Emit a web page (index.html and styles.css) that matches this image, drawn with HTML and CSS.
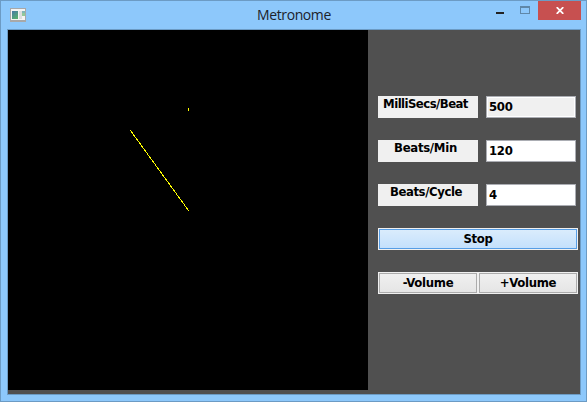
FILE: index.html
```
<!DOCTYPE html>
<html lang="en">
<head>
<meta charset="utf-8">
<title>Metronome</title>
<link rel="stylesheet" href="styles.css">
</head>
<body>
<div class="window">
  <header class="titlebar">
    <svg class="app-icon" width="16" height="14" viewBox="0 0 16 14" shape-rendering="crispEdges">
      <defs><linearGradient id="pane" x1="0" y1="0" x2="0.6" y2="1"><stop offset="0" stop-color="#4779a8"/><stop offset="1" stop-color="#57ad72"/></linearGradient></defs>
      <rect width="16" height="14" rx="1" fill="#a8a8a8"/>
      <rect x="1" y="1" width="14" height="11" fill="#f4f4f4"/>
      <rect x="2" y="3" width="6" height="8" fill="url(#pane)"/>
      <rect x="9" y="3" width="3" height="8" fill="#dedede"/>
      <rect x="12" y="3" width="3" height="2" fill="#7fb6b8"/>
      <rect x="12" y="5" width="3" height="3" fill="#92c99a"/>
    </svg>
    <h1 class="title">Metronome</h1>
    <div class="controls">
      <svg width="42" height="19" viewBox="0 0 42 19" shape-rendering="crispEdges">
        <rect x="0" y="11" width="8" height="2" fill="#222"/>
        <path d="M24 5h10v8H24zM25 7v5h8V7z" fill="#5f87a8" fill-rule="evenodd"/>
      </svg>
      <span class="close">
        <svg width="8" height="7" viewBox="0 0 8 7"><path d="M.7 .2 7.3 6.8M7.3 .2 .7 6.8" stroke="#fff" stroke-width="1.8"/></svg>
      </span>
    </div>
  </header>
  <main class="client">
    <svg class="dial" width="360" height="360" viewBox="0 0 360 360" shape-rendering="crispEdges">
      <path d="M180 78h1v3h-1z" fill="#ff0"/>
      <path d="M122.5 100.5 180.5 180.5" stroke="#ff0" stroke-width="1" stroke-linecap="square"/>
    </svg>
    <section class="panel">
      <div class="row"><span class="label l-beat">MilliSecs/Beat</span><span class="field readonly">500</span></div>
      <div class="row"><span class="label">Beats/Min</span><span class="field">120</span></div>
      <div class="row"><span class="label l-cycle">Beats/Cycle</span><span class="field">4</span></div>
      <div class="buttons"><button class="btn focused">Stop</button></div>
      <div class="buttons"><button class="btn">-Volume</button><button class="btn">+Volume</button></div>
    </section>
  </main>
</div>
</body>
</html>
```
FILE: styles.css
```
* { box-sizing: border-box; }
body { margin: 0; }
.window {
  width: 587px;
  height: 402px;
  background: #8dc8fb;
  border: 1px solid #6c9bc4;
  padding: 0 5px 6px 6px;
}
.titlebar {
  height: 28px;
  display: grid;
  grid-template-columns: 180px 213px 1fr;
  align-items: start;
}
.app-icon { margin: 7px 0 0 3px; }
.title {
  margin: 4px 0 0;
  padding-left: 1px;
  text-align: center;
  font: 400 14px/20px "Open Sans", "Noto Sans", sans-serif;
  letter-spacing: -0.4px;
  color: #1c222a;
}
.controls { display: flex; justify-content: flex-end; }
.close {
  width: 43px;
  height: 19px;
  display: flex;
  align-items: center;
  justify-content: center;
  background: #c75050;
}
.client {
  width: 574px;
  height: 366px;
  display: flex;
  align-items: flex-start;
  background: #505050;
  border: 1px solid #6c9bc4;
}
.dial { display: block; background: #000; }
.panel {
  width: 200px;
  margin: 66px 0 0 10px;
  display: flex;
  flex-direction: column;
  gap: 22px;
  font: bold 13px/16px "DejaVu Sans Condensed", "DejaVu Sans", sans-serif;
  font-stretch: condensed;
  letter-spacing: -0.3px;
  color: #000;
}
.row { display: flex; gap: 8px; height: 22px; }
.label {
  width: 100px;
  padding-right: 5px;
  background: #f0f0f0;
  text-align: center;
  white-space: nowrap;
}
.l-beat { letter-spacing: -0.55px; }
.l-cycle { padding-right: 4px; letter-spacing: -0.4px; }
.field {
  width: 90px;
  padding: 2px 2px;
  border: 1px solid #abadb3;
  background: #fff;
}
.readonly { background: #f0f0f0; box-shadow: inset 0 0 0 1px #fff; }
.buttons {
  display: flex;
  gap: 2px;
  height: 22px;
  padding: 1px;
  background: #f0f0f0;
}
.btn {
  flex: 1;
  padding: 0;
  border: 1px solid #acacac;
  background: linear-gradient(#f0f0f0, #e5e5e5);
  font: inherit;
  letter-spacing: inherit;
  color: inherit;
}
.focused {
  border-color: #569de5;
  background: linear-gradient(#daecfc, #c4e0fc);
}
```
